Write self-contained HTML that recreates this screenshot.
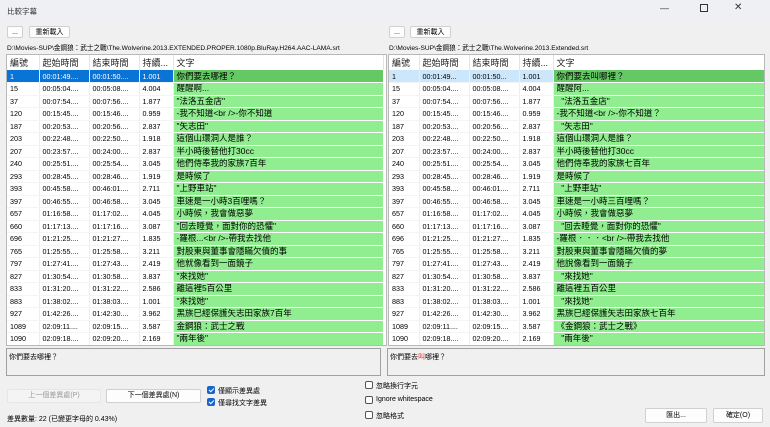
<!DOCTYPE html>
<html><head><meta charset="utf-8"><style>
*{box-sizing:border-box;margin:0;padding:0}
body{width:770px;height:427px;background:#f0f0f0;font-family:"Liberation Sans","Noto Sans CJK TC",sans-serif;font-size:8px;color:#000;position:relative;overflow:hidden}
.a{position:absolute}
.title{left:0;top:0;width:770px;height:22px;background:#eef0f4}
.btn{position:absolute;background:#fdfdfd;border:1px solid #d0d0d0;border-radius:2px;text-align:center;font-size:7px;line-height:11px}
.tb{position:absolute;background:#fff;border:1px solid #b8b8b8;overflow:hidden}
table{border-collapse:collapse;table-layout:fixed;font-size:7.2px}
tr{height:12.5px}
td{height:12.5px;line-height:11px;padding:0 0 0 3px;white-space:nowrap;overflow:hidden;border-right:1px solid #eee;border-bottom:1px solid #f4f4f4}
td.g{background:#90ee90;font-size:8.5px;border-bottom:1px solid #fff;border-right:none}
tr.h{height:15px}
tr.h td{height:15px;line-height:14px;font-size:9px;color:#222;background:#fff;border-right:1px solid #e5e5e5;border-bottom:none}
tr.s1 td{background:#0a74d6;color:#fff}
tr.s1 td.g,tr.s2 td.g{background:#64c864;color:#000}
tr.s2 td{background:#cce6fb}
.txt{position:absolute;background:#f0f0f0;border:1px solid #a0a0a0;font-size:7px;padding:3px 2px}
.cb{position:absolute;width:8px;height:8px;border:1px solid #555;border-radius:2px;background:#fff}
.cb.on{background:#1a66c8;border-color:#1a66c8}
.cb.on::after{content:"";position:absolute;left:2px;top:0px;width:2px;height:4px;border:solid #fff;border-width:0 1px 1px 0;transform:rotate(45deg)}
.lbl{position:absolute;font-size:7px}
</style></head><body>
<div class="a title"></div>
<div class="a" style="left:7px;top:6px;font-size:7.5px;color:#333">比較字幕</div>
<div class="a" style="left:660px;top:3px;font-size:9px;color:#333">—</div>
<div class="a" style="left:700px;top:4px;width:8px;height:8px;border:1px solid #333"></div>
<div class="a" style="left:734px;top:2px;font-size:10px;color:#333">✕</div>

<div class="btn" style="left:7px;top:26px;width:16px;height:12px">...</div>
<div class="btn" style="left:29px;top:26px;width:41px;height:12px">重新載入</div>
<div class="btn" style="left:389px;top:26px;width:16px;height:12px">...</div>
<div class="btn" style="left:410px;top:26px;width:41px;height:12px">重新載入</div>
<div class="a" style="left:7px;top:42px;font-size:6.6px">D:\Movies-SUP\金鋼狼：武士之戰\The.Wolverine.2013.EXTENDED.PROPER.1080p.BluRay.H264.AAC-LAMA.srt</div>
<div class="a" style="left:389px;top:42px;font-size:6.6px">D:\Movies-SUP\金鋼狼：武士之戰\The.Wolverine.2013.Extended.srt</div>

<div class="tb" style="left:6px;top:54px;width:381px;height:292px">
<table style="width:376px"><colgroup><col style="width:32px"><col style="width:50px"><col style="width:50px"><col style="width:34px"><col style="width:210px"></colgroup>
<tr class="h"><td>編號</td><td>起始時間</td><td>結束時間</td><td>持續...</td><td>文字</td></tr>
<tr class="s1"><td>1</td><td>00:01:49....</td><td>00:01:50....</td><td>1.001</td><td class="g">你們要去哪裡？</td></tr>
<tr><td>15</td><td>00:05:04....</td><td>00:05:08....</td><td>4.004</td><td class="g">醒醒啊...</td></tr>
<tr><td>37</td><td>00:07:54....</td><td>00:07:56....</td><td>1.877</td><td class="g">"法洛五金店"</td></tr>
<tr><td>120</td><td>00:15:45....</td><td>00:15:46....</td><td>0.959</td><td class="g">-我不知道&lt;br /&gt;-你不知道</td></tr>
<tr><td>187</td><td>00:20:53....</td><td>00:20:56....</td><td>2.837</td><td class="g">"矢志田"</td></tr>
<tr><td>203</td><td>00:22:48....</td><td>00:22:50....</td><td>1.918</td><td class="g">這個山環洞人是誰？</td></tr>
<tr><td>207</td><td>00:23:57....</td><td>00:24:00....</td><td>2.837</td><td class="g">半小時後替他打30cc</td></tr>
<tr><td>240</td><td>00:25:51....</td><td>00:25:54....</td><td>3.045</td><td class="g">他們侍奉我的家族7百年</td></tr>
<tr><td>293</td><td>00:28:45....</td><td>00:28:46....</td><td>1.919</td><td class="g">是時候了</td></tr>
<tr><td>393</td><td>00:45:58....</td><td>00:46:01....</td><td>2.711</td><td class="g">"上野車站"</td></tr>
<tr><td>397</td><td>00:46:55....</td><td>00:46:58....</td><td>3.045</td><td class="g">車速是一小時3百哩嗎？</td></tr>
<tr><td>657</td><td>01:16:58....</td><td>01:17:02....</td><td>4.045</td><td class="g">小時候，我會做惡夢</td></tr>
<tr><td>660</td><td>01:17:13....</td><td>01:17:16....</td><td>3.087</td><td class="g">"回去睡覺，面對你的恐懼"</td></tr>
<tr><td>696</td><td>01:21:25....</td><td>01:21:27....</td><td>1.835</td><td class="g">-羅根...&lt;br /&gt;-帶我去找他</td></tr>
<tr><td>765</td><td>01:25:55....</td><td>01:25:58....</td><td>3.211</td><td class="g">對股東與董事會隱瞞欠債的事</td></tr>
<tr><td>797</td><td>01:27:41....</td><td>01:27:43....</td><td>2.419</td><td class="g">他就像看到一面鏡子</td></tr>
<tr><td>827</td><td>01:30:54....</td><td>01:30:58....</td><td>3.837</td><td class="g">"來找她"</td></tr>
<tr><td>833</td><td>01:31:20....</td><td>01:31:22....</td><td>2.586</td><td class="g">離這裡5百公里</td></tr>
<tr><td>883</td><td>01:38:02....</td><td>01:38:03....</td><td>1.001</td><td class="g">"來找她"</td></tr>
<tr><td>927</td><td>01:42:26....</td><td>01:42:30....</td><td>3.962</td><td class="g">黑族巳經保護矢志田家族7百年</td></tr>
<tr><td>1089</td><td>02:09:11....</td><td>02:09:15....</td><td>3.587</td><td class="g">金鋼狼：武士之戰</td></tr>
<tr><td>1090</td><td>02:09:18....</td><td>02:09:20....</td><td>2.169</td><td class="g">"兩年後"</td></tr>
</table></div>

<div class="tb" style="left:388px;top:54px;width:377px;height:292px">
<table style="width:375px"><colgroup><col style="width:30px"><col style="width:50px"><col style="width:50px"><col style="width:34px"><col style="width:211px"></colgroup>
<tr class="h"><td>編號</td><td>起始時間</td><td>結束時間</td><td>持續...</td><td>文字</td></tr>
<tr class="s2"><td>1</td><td>00:01:49...</td><td>00:01:50...</td><td>1.001</td><td class="g">你們要去叫哪裡？</td></tr>
<tr><td>15</td><td>00:05:04....</td><td>00:05:08....</td><td>4.004</td><td class="g">醒醒阿...</td></tr>
<tr><td>37</td><td>00:07:54....</td><td>00:07:56....</td><td>1.877</td><td class="g">&nbsp;&nbsp;"法洛五金店"</td></tr>
<tr><td>120</td><td>00:15:45....</td><td>00:15:46....</td><td>0.959</td><td class="g">-我不知道&lt;br /&gt;-你不知道？</td></tr>
<tr><td>187</td><td>00:20:53....</td><td>00:20:56....</td><td>2.837</td><td class="g">&nbsp;&nbsp;"矢志田"</td></tr>
<tr><td>203</td><td>00:22:48....</td><td>00:22:50....</td><td>1.918</td><td class="g">這個山環洞人是誰？</td></tr>
<tr><td>207</td><td>00:23:57....</td><td>00:24:00....</td><td>2.837</td><td class="g">半小時後替他打30cc</td></tr>
<tr><td>240</td><td>00:25:51....</td><td>00:25:54....</td><td>3.045</td><td class="g">他們侍奉我的家族七百年</td></tr>
<tr><td>293</td><td>00:28:45....</td><td>00:28:46....</td><td>1.919</td><td class="g">是時候了</td></tr>
<tr><td>393</td><td>00:45:58....</td><td>00:46:01....</td><td>2.711</td><td class="g">&nbsp;&nbsp;"上野車站"</td></tr>
<tr><td>397</td><td>00:46:55....</td><td>00:46:58....</td><td>3.045</td><td class="g">車速是一小時三百哩嗎？</td></tr>
<tr><td>657</td><td>01:16:58....</td><td>01:17:02....</td><td>4.045</td><td class="g">小時候，我會做惡夢</td></tr>
<tr><td>660</td><td>01:17:13....</td><td>01:17:16....</td><td>3.087</td><td class="g">&nbsp;&nbsp;"回去睡覺，面對你的恐懼"</td></tr>
<tr><td>696</td><td>01:21:25....</td><td>01:21:27....</td><td>1.835</td><td class="g">-羅根．．．&lt;br /&gt;-帶我去找他</td></tr>
<tr><td>765</td><td>01:25:55....</td><td>01:25:58....</td><td>3.211</td><td class="g">對股東與董事會隱瞞欠債的夢</td></tr>
<tr><td>797</td><td>01:27:41....</td><td>01:27:43....</td><td>2.419</td><td class="g">他說像看到一面鏡子</td></tr>
<tr><td>827</td><td>01:30:54....</td><td>01:30:58....</td><td>3.837</td><td class="g">&nbsp;&nbsp;"來找她"</td></tr>
<tr><td>833</td><td>01:31:20....</td><td>01:31:22....</td><td>2.586</td><td class="g">離這裡五百公里</td></tr>
<tr><td>883</td><td>01:38:02....</td><td>01:38:03....</td><td>1.001</td><td class="g">&nbsp;&nbsp;"來找她"</td></tr>
<tr><td>927</td><td>01:42:26....</td><td>01:42:30....</td><td>3.962</td><td class="g">黑族巳經保護矢志田家族七百年</td></tr>
<tr><td>1089</td><td>02:09:11....</td><td>02:09:15....</td><td>3.587</td><td class="g">《金鋼狼：武士之戰》</td></tr>
<tr><td>1090</td><td>02:09:18....</td><td>02:09:20....</td><td>2.169</td><td class="g">&nbsp;&nbsp;"兩年後"</td></tr>
</table></div>

<div class="txt" style="left:6px;top:348px;width:375px;height:28px">你們要去哪裡？</div>
<div class="txt" style="left:387px;top:348px;width:378px;height:28px">你們要去<span style="color:#e03030">叫</span>哪裡？</div>

<div class="btn" style="left:7px;top:389px;width:94px;height:14px;line-height:12px;color:#999;background:#f4f4f4;border-color:#e6e6e6">上一個差異處(P)</div>
<div class="btn" style="left:106px;top:389px;width:95px;height:14px;line-height:12px">下一個差異處(N)</div>
<div class="cb on" style="left:207px;top:386px"></div><div class="lbl" style="left:218px;top:386px">僅顯示差異處</div>
<div class="cb on" style="left:207px;top:398px"></div><div class="lbl" style="left:218px;top:398px">僅尋找文字差異</div>
<div class="cb" style="left:365px;top:381px"></div><div class="lbl" style="left:376px;top:381px">忽略換行字元</div>
<div class="cb" style="left:365px;top:396px"></div><div class="lbl" style="left:376px;top:396px">Ignore whitespace</div>
<div class="cb" style="left:365px;top:411px"></div><div class="lbl" style="left:376px;top:411px">忽略格式</div>
<div class="lbl" style="left:7px;top:414px">差異數量: 22 (已變更字母的 0.43%)</div>
<div class="btn" style="left:645px;top:408px;width:62px;height:15px;line-height:13px">匯出...</div>
<div class="btn" style="left:713px;top:408px;width:50px;height:15px;line-height:13px">確定(O)</div>
</body></html>
